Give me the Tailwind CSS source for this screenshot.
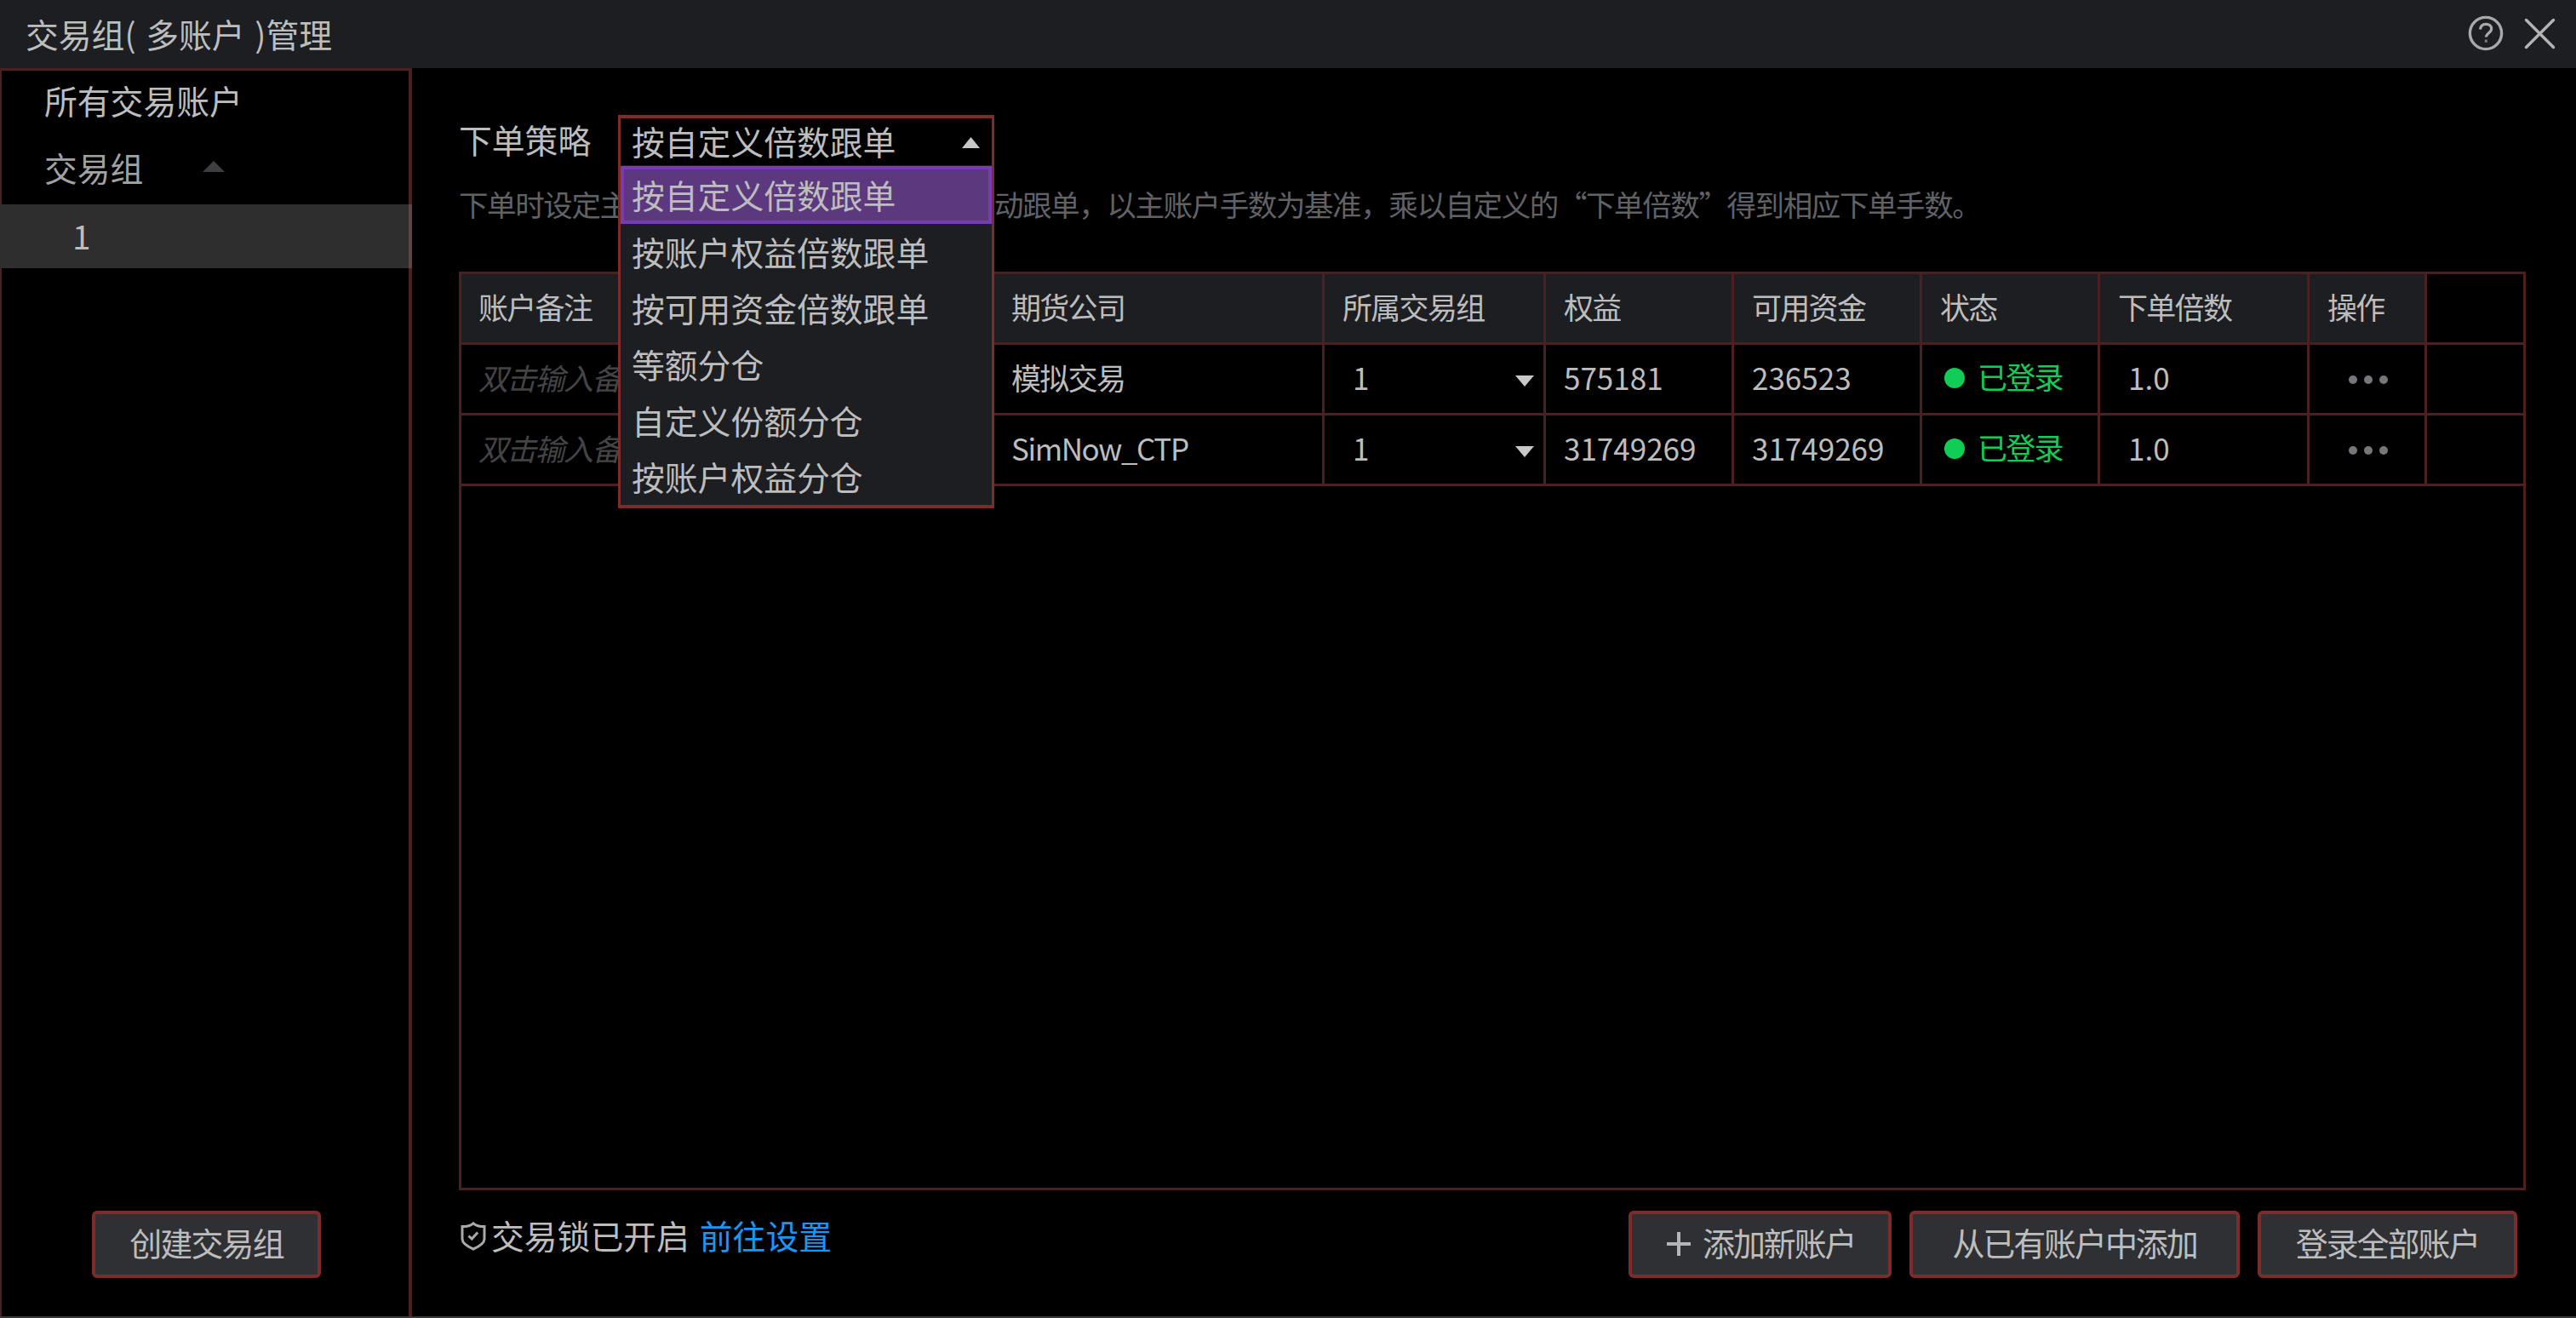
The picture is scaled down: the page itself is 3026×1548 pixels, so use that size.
<!DOCTYPE html>
<html lang="zh-CN">
  <head>
    <meta charset="UTF-8" />
    <meta name="viewport" content="width=device-width, initial-scale=1.0" />
    <title>交易组( 多账户 )管理</title>
    <script src="https://cdn.jsdelivr.net/npm/@tailwindcss/browser@4"></script>
  </head>
  <body class="bg-black">
    <div
      class="flex flex-col w-[3026px] h-[1548px] overflow-hidden bg-black border-b-2 border-[#3a3a3b] font-['Noto_Sans_CJK_SC',sans-serif] text-[38.8px] leading-none text-[#bdbdbd]"
    >
      <!-- Title bar -->
      <header class="flex h-20 shrink-0 items-center justify-between bg-[#1c1e22] pr-6 pb-0.5 pl-[30px]">
        <h1 class="whitespace-pre [word-spacing:3px]">交易组( 多账户 )管理</h1>
        <div class="flex items-center gap-6">
          <svg class="size-[42px]" viewBox="0 0 42 42" fill="none" stroke="#a9a9ab" stroke-width="3.4">
            <circle cx="21" cy="21" r="18.6" />
            <path d="M14.5 16.5c.4-4 3-6.2 6.7-6.2 3.8 0 6.5 2.2 6.5 5.5 0 4.9-6.2 5-6.2 9.7" stroke-width="3.2" />
            <path d="M21.3 28.5v3.4" stroke-width="3" stroke="#77787a" />
          </svg>
          <svg class="size-[37px]" viewBox="0 0 37 37" fill="none" stroke="#b4b4b6" stroke-width="3.4" stroke-linecap="round">
            <path d="M2.5 2.5l32 32M34.5 2.5l-32 32" />
          </svg>
        </div>
      </header>

      <div class="flex grow">
        <!-- Sidebar -->
        <aside class="flex w-[484px] flex-col border-t-3 border-r-4 border-l-2 border-[#4c1f20]">
          <div class="flex h-[75px] items-center pb-[7px] pl-[50px]">所有交易账户</div>
          <div class="flex h-[82px] items-center gap-[70px] pb-[6px] pl-[50px] text-[#a2a2a3]">
            交易组
            <svg class="mt-[-1px] h-[13px] w-[26px]" viewBox="0 0 26 13"><path d="M0 13L13 0l13 13z" fill="#3e3e40" /></svg>
          </div>
          <div class="-mr-1 -ml-0.5 flex h-[75px] items-center border-r-4 border-[#5c4344] bg-[#2e2e2e] pb-0.5 pl-[85px]">1</div>
          <button
            class="mt-auto mb-[45px] ml-[106px] h-[79px] w-[269px] rounded-md border-4 border-[#7e2b2b] bg-[#2f3034] pb-[6px] text-[38px] tracking-[-1.9px]"
          >
            创建交易组
          </button>
        </aside>

        <!-- Content -->
        <main class="flex grow flex-col pt-[55px] pl-[55px]">
          <div class="flex h-[60px]">
            <div class="flex h-[62px] w-[187px] items-center pb-[6px]">下单策略</div>
            <div class="relative flex h-[64px] w-[442px] items-center justify-between border-x-3 border-y-4 border-[#7e2b2b] pr-[14px] pl-[13px]">
              <span class="-mt-[3px]">按自定义倍数跟单</span>
              <svg class="h-[13px] w-[21px]" viewBox="0 0 21 13"><path d="M0 13L10.5 0 21 13z" fill="#c8c8c8" /></svg>
              <!-- Strategy menu -->
              <ul class="absolute top-[55px] -left-[3px] z-10 h-[403px] w-[442px] border-x-3 border-b-4 border-[#7e2b2b] bg-[#1c1e22] pt-[1px]">
                <li class="flex h-[68px] items-center border-4 border-[#783bb0] bg-[#5c397f] pb-px pl-[9px]">按自定义倍数跟单</li>
                <li class="flex h-[66px] items-center pb-px pl-[13px]">按账户权益倍数跟单</li>
                <li class="flex h-[66px] items-center pb-px pl-[13px]">按可用资金倍数跟单</li>
                <li class="flex h-[66px] items-center pb-px pl-[13px]">等额分仓</li>
                <li class="flex h-[66px] items-center pb-px pl-[13px]">自定义份额分仓</li>
                <li class="flex h-[66px] items-center pb-px pl-[13px]">按账户权益分仓</li>
              </ul>
            </div>
          </div>
          <p class="mt-[26px] h-[36px] text-[34.5px] leading-9 tracking-[-1.4px] whitespace-pre text-[#606266]">下单时设定主账户，下单后其他账户将会自动跟单，以主账户手数为基准，乘以自定义的“下单倍数”得到相应下单手数。</p>

          <!-- Account table -->
          <div class="mt-[62px] h-[1079px] w-[2428px] border-3 border-[#4c1f20] text-[35px]">
            <div class="grid h-[83px] grid-cols-[626px_388px_260px_221px_221px_209px_246px_138px_1fr] border-b-3 border-[#4c1f20] tracking-[-1.7px]">
              <div class="flex items-center border-r-3 border-[#4c1f20] bg-[#1c1e22] pb-[5px] pl-[20px]">账户备注</div>
              <div class="flex items-center border-r-3 border-[#4c1f20] bg-[#1c1e22] pb-[5px] pl-[20px]">期货公司</div>
              <div class="flex items-center border-r-3 border-[#4c1f20] bg-[#1c1e22] pb-[5px] pl-[21px]">所属交易组</div>
              <div class="flex items-center border-r-3 border-[#4c1f20] bg-[#1c1e22] pb-[5px] pl-[21px]">权益</div>
              <div class="flex items-center border-r-3 border-[#4c1f20] bg-[#1c1e22] pb-[5px] pl-[21px]">可用资金</div>
              <div class="flex items-center border-r-3 border-[#4c1f20] bg-[#1c1e22] pb-[5px] pl-[21px]">状态</div>
              <div class="flex items-center border-r-3 border-[#4c1f20] bg-[#1c1e22] pb-[5px] pl-[21px]">下单倍数</div>
              <div class="flex items-center border-r-3 border-[#4c1f20] bg-[#1c1e22] pb-[5px] pl-[21px]">操作</div>
              <div></div>
            </div>
            <div class="grid h-[83px] grid-cols-[626px_388px_260px_221px_221px_209px_246px_138px_1fr] border-b-3 border-[#4c1f20]">
              <div class="flex items-center border-r-3 border-[#4c1f20] pb-[5px] pl-[20px] tracking-[-1.7px] text-[#444446] italic">双击输入备注</div>
              <div class="flex items-center border-r-3 border-[#4c1f20] pb-[5px] pl-[20px] tracking-[-1.7px]">模拟交易</div>
              <div class="flex items-center justify-between border-r-3 border-[#4c1f20] pr-[11px] pb-[5px] pl-[33px]">
                1
                <svg class="mt-[9px] h-[13px] w-[22px]" viewBox="0 0 22 13"><path d="M0 0h22L11 13z" fill="#c8c8c8" /></svg>
              </div>
              <div class="flex items-center border-r-3 border-[#4c1f20] pb-[5px] pl-[21px]">575181</div>
              <div class="flex items-center border-r-3 border-[#4c1f20] pb-[5px] pl-[21px]">236523</div>
              <div class="flex items-center gap-[15px] border-r-3 border-[#4c1f20] pb-[8px] pl-[26px] tracking-[-1.7px] text-[#10cd55]">
                <span class="mt-[5px] size-6 rounded-full bg-[#10cd55]"></span>已登录
              </div>
              <div class="flex items-center border-r-3 border-[#4c1f20] pb-[5px] pl-[33px]">1.0</div>
              <div class="flex items-center gap-2 border-r-3 border-[#4c1f20] pt-0.5 pl-[46px]">
                <span class="size-[10px] rounded-full bg-[#77777b]"></span>
                <span class="size-[10px] rounded-full bg-[#77777b]"></span>
                <span class="size-[10px] rounded-full bg-[#77777b]"></span>
              </div>
              <div></div>
            </div>
            <div class="grid h-[83px] grid-cols-[626px_388px_260px_221px_221px_209px_246px_138px_1fr] border-b-3 border-[#4c1f20]">
              <div class="flex items-center border-r-3 border-[#4c1f20] pb-[5px] pl-[20px] tracking-[-1.7px] text-[#444446] italic">双击输入备注</div>
              <div class="flex items-center border-r-3 border-[#4c1f20] pb-[5px] pl-[20px] tracking-[-1.4px]">SimNow_CTP</div>
              <div class="flex items-center justify-between border-r-3 border-[#4c1f20] pr-[11px] pb-[5px] pl-[33px]">
                1
                <svg class="mt-[9px] h-[13px] w-[22px]" viewBox="0 0 22 13"><path d="M0 0h22L11 13z" fill="#c8c8c8" /></svg>
              </div>
              <div class="flex items-center border-r-3 border-[#4c1f20] pb-[5px] pl-[21px]">31749269</div>
              <div class="flex items-center border-r-3 border-[#4c1f20] pb-[5px] pl-[21px]">31749269</div>
              <div class="flex items-center gap-[15px] border-r-3 border-[#4c1f20] pb-[8px] pl-[26px] tracking-[-1.7px] text-[#10cd55]">
                <span class="mt-[5px] size-6 rounded-full bg-[#10cd55]"></span>已登录
              </div>
              <div class="flex items-center border-r-3 border-[#4c1f20] pb-[5px] pl-[33px]">1.0</div>
              <div class="flex items-center gap-2 border-r-3 border-[#4c1f20] pt-0.5 pl-[46px]">
                <span class="size-[10px] rounded-full bg-[#77777b]"></span>
                <span class="size-[10px] rounded-full bg-[#77777b]"></span>
                <span class="size-[10px] rounded-full bg-[#77777b]"></span>
              </div>
              <div></div>
            </div>
          </div>

          <!-- Footer -->
          <footer class="flex w-[2418px] items-start pt-[24px]">
            <div class="flex h-[62px] items-center pb-[5px]">
              <svg class="mt-[3px] ml-0.5 h-[34px] w-[30px]" viewBox="0 0 30 34" fill="none" stroke="#a9a9ab" stroke-width="3">
                <path d="M15 1.8C12 4.6 7 5.6 2 5.6V20c0 5 6 9 13 12 7-3 13-7 13-12V5.6c-5 0-10-1-13-3.800z" />
                <path d="M9.5 16.5l3.700 3.500 7-7.500" />
              </svg>
              <span class="ml-1.5">交易锁已开启</span>
              <a class="ml-[12px] text-[#1a97f5]">前往设置</a>
            </div>
            <div class="ml-auto flex gap-[21px] text-[38px] tracking-[-2.1px]">
              <button class="flex h-[79px] w-[309px] items-center rounded-md border-4 border-[#7e2b2b] bg-[#2f3034] pb-[6px] pl-[41px]">
                <svg class="mt-[5px] mr-[14px] size-7" viewBox="0 0 28 28" stroke="#b4b4b6" stroke-width="4"><path d="M14 0v28M0 14h28" /></svg>
                添加新账户
              </button>
              <button class="h-[79px] w-[388px] rounded-md border-4 border-[#7e2b2b] bg-[#2f3034] pb-[6px]">从已有账户中添加</button>
              <button class="h-[79px] w-[305px] rounded-md border-4 border-[#7e2b2b] bg-[#2f3034] pb-[6px]">登录全部账户</button>
            </div>
          </footer>
        </main>
      </div>
    </div>
  </body>
</html>
